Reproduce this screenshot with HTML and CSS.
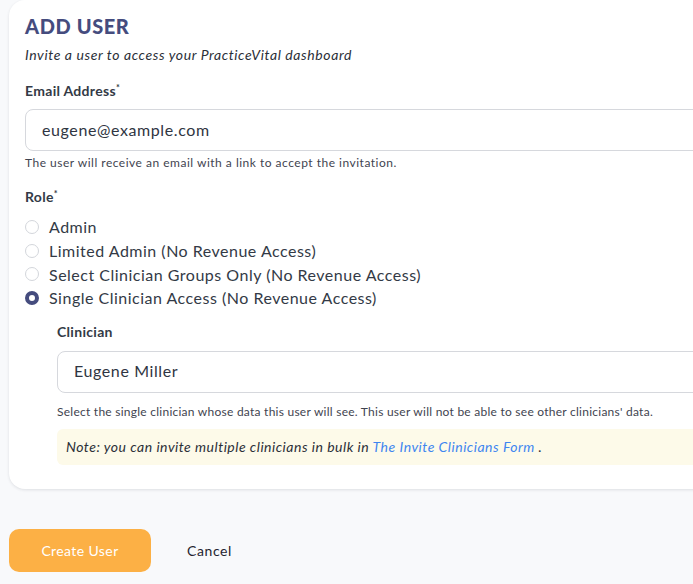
FILE: index.html
```html
<!DOCTYPE html>
<html lang="en">
  <head>
    <meta charset="UTF-8" />
    <meta name="viewport" content="width=device-width, initial-scale=1.0" />
    <title>Add User</title>
    <link rel="stylesheet" href="styles.css">
  </head>
  <body>
    <div class="page">
      <div class="card">
        <h1 class="title">ADD USER</h1>
        <p class="subtitle">Invite a user to access your PracticeVital dashboard</p>

        <label class="field-label" for="email">Email Address<sup>*</sup></label>
        <input id="email" class="text-input" type="text" value="eugene@example.com" />
        <p class="help">The user will receive an email with a link to accept the invitation.</p>

        <div class="field-label role-label">Role<sup>*</sup></div>
        <ul class="radios">
          <li class="radio-row"><span class="radio"></span>Admin</li>
          <li class="radio-row"><span class="radio"></span>Limited Admin (No Revenue Access)</li>
          <li class="radio-row"><span class="radio"></span>Select Clinician Groups Only (No Revenue Access)</li>
          <li class="radio-row"><span class="radio checked"></span>Single Clinician Access (No Revenue Access)</li>
        </ul>

        <div class="clinician">
          <label class="field-label" for="clinician">Clinician</label>
          <input id="clinician" class="text-input" type="text" value="Eugene Miller" />
          <p class="help help-wide">Select the single clinician whose data this user will see. This user will not be able to see other clinicians' data.</p>
          <p class="note">Note: you can invite multiple clinicians in bulk in <a href="#">The Invite Clinicians Form</a> .</p>
        </div>
      </div>

      <div class="actions">
        <button class="btn-primary">Create User</button>
        <button class="btn-link">Cancel</button>
      </div>
    </div>
  </body>
</html>
```

FILE: styles.css
```css
* {
  margin: 0;
  padding: 0;
  box-sizing: border-box;
}
html,
body {
  overflow: hidden;
}
body {
  background-color: #f8f9fb;
  font-family: Lato, "Liberation Sans", sans-serif;
  color: #2f3542;
  letter-spacing: 0.5px;
}
.page {
  width: 760px;
  padding-left: 9px;
}
.card {
  background-color: #fff;
  border-radius: 16px;
  box-shadow: 0 1px 3px rgba(30, 40, 60, 0.12);
  padding: 14px 16px 24px;
}
.title {
  font-size: 20px;
  line-height: 24px;
  font-weight: 900;
  letter-spacing: 0.6px;
  color: #454c7e;
}
.subtitle {
  margin-top: 7px;
  font-size: 14px;
  line-height: 20px;
  font-style: italic;
  letter-spacing: 0.6px;
  color: #2b2f38;
}
.field-label {
  display: block;
  margin-top: 16px;
  font-size: 14px;
  line-height: 20px;
  font-weight: 700;
  letter-spacing: 0.3px;
  color: #333a46;
}
.field-label sup {
  font-size: 9px;
  vertical-align: 5px;
  line-height: 0;
}
.text-input {
  display: block;
  width: 100%;
  height: 42px;
  margin-top: 8px;
  padding: 0 16px 2px;
  border: 1px solid #d6d8dd;
  border-radius: 8px;
  font-family: inherit;
  font-size: 16px;
  letter-spacing: 0.6px;
  color: #2f3542;
  background: #fff;
  outline: none;
}
.help {
  margin-top: 4px;
  font-size: 12px;
  line-height: 16px;
  color: #3f4450;
}
.radios {
  list-style: none;
  margin-top: 8px;
}
.radio-row {
  display: flex;
  align-items: center;
  gap: 10px;
  height: 23.7px;
  font-size: 16px;
  color: #333a46;
}
.radio {
  width: 14px;
  height: 14px;
  border: 1px solid #d3d6db;
  border-radius: 50%;
  background: #fff;
  flex-shrink: 0;
}
.radio.checked {
  border: 4.5px solid #454c7e;
}
.clinician {
  padding-left: 32px;
  margin-top: -4px;
}
.clinician .field-label {
  margin-top: 16px;
}
.clinician .text-input {
  margin-top: 9px;
}
.help-wide {
  margin-top: 11px;
  letter-spacing: 0.25px;
}
.note {
  margin-top: 9px;
  height: 36px;
  line-height: 36px;
  padding-left: 9px;
  background-color: #fdfae9;
  border-radius: 6px;
  font-size: 14px;
  font-style: italic;
  color: #2b2f38;
}
.note a {
  color: #3f86f0;
  text-decoration: none;
}
.actions {
  display: flex;
  align-items: center;
  margin-top: 40px;
}
.btn-primary {
  width: 142px;
  height: 43px;
  border: none;
  border-radius: 10px;
  background-color: #fcb045;
  color: #fff;
  font-family: inherit;
  font-size: 14px;
  letter-spacing: 0.4px;
  cursor: pointer;
}
.btn-link {
  margin-left: 36px;
  border: none;
  background: none;
  font-family: inherit;
  font-size: 14px;
  letter-spacing: 0.6px;
  color: #1f2430;
  cursor: pointer;
}
```
